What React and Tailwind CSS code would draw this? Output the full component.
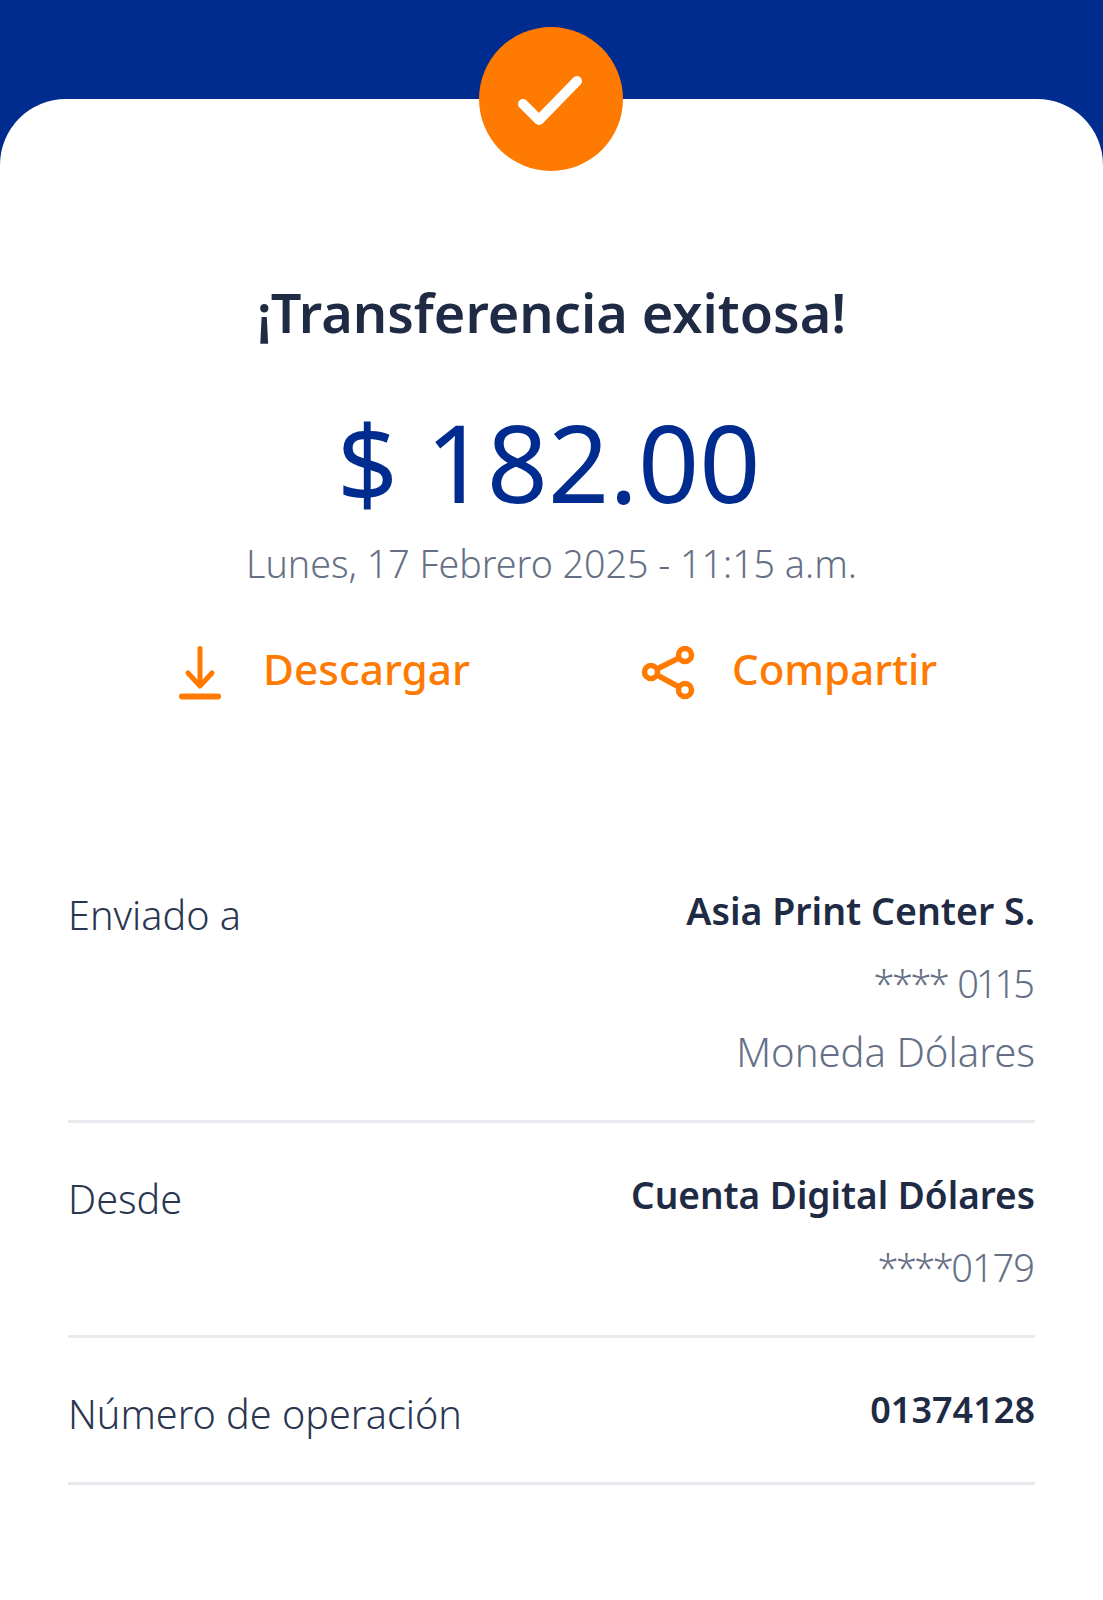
import React from "react";

function Row({ label, children, className }) {
  return (
    <div className={"flex justify-between items-start border-b-[3px] border-[#e8eaf0] " + className}>
      <div className="text-[39.6px] leading-[48px] text-[#2a3550] mt-[6px] font-light">{label}</div>
      <div className="flex flex-col items-end">{children}</div>
    </div>
  );
}

export default function App() {
  return (
    <div className="w-[1103px] h-[1600px] bg-white font-['Noto_Sans',sans-serif] overflow-hidden">
      <div className="bg-[#002b8f] h-[165px] flex justify-center relative">
        <div className="absolute left-0 right-0 top-[99px] h-[66px] bg-white rounded-t-[66px]"></div>
        <div className="absolute top-[27px] left-[479px] w-[144px] h-[144px] rounded-full bg-[#ff7a00] flex items-center justify-center">
          <svg width="66" height="54" viewBox="0 0 66 54" fill="none">
            <path d="M5 32L21 48L59 9" stroke="white" strokeWidth="10" strokeLinecap="round" strokeLinejoin="round" />
          </svg>
        </div>
      </div>
      <div className="flex flex-col items-center">
        <div className="mt-[116px] text-[54px] leading-[62px] font-semibold text-[#1f2a44]">¡Transferencia exitosa!</div>
        <div className="mt-[59px] mr-[6px] text-[107px] leading-[120px] text-[#002b8f] font-normal">$ 182.00</div>
        <div className="mt-[18px] text-[37.6px] leading-[48px] text-[#667085] font-light">Lunes, 17 Febrero 2025 - 11:15 a.m.</div>
        <div className="mt-[51px] w-full pl-[179px] flex items-start">
          <div className="flex items-start gap-[42px] w-[462px]">
            <svg width="42" height="54" viewBox="0 0 42 54" fill="none" stroke="#ff7a00" strokeLinecap="round" strokeLinejoin="round" className="mt-[7px]">
              <path d="M21 2.5V39" strokeWidth="5" />
              <path d="M9 27L21 40L33 27" strokeWidth="5" />
              <path d="M3 50.5H39" strokeWidth="6" />
            </svg>
            <span className="mt-[2px] text-[42.4px] leading-[56px] font-medium text-[#ff7a00]">Descargar</span>
          </div>
          <div className="flex items-start gap-[36px]">
            <svg width="55" height="54" viewBox="0 0 55 54" fill="none" stroke="#ff7a00" strokeWidth="5.5" className="mt-[7px]">
              <circle cx="10" cy="26" r="6.5" />
              <circle cx="44" cy="9" r="6.5" />
              <circle cx="44" cy="44" r="6.5" />
              <path d="M16 23L38 12M16 29L38 41" />
            </svg>
            <span className="mt-[2px] text-[42px] leading-[56px] font-medium text-[#ff7a00]">Compartir</span>
          </div>
        </div>
      </div>
      <div className="mx-[68px] mt-[185px] flex flex-col">
        <Row label="Enviado a" className="h-[238px]">
          <div className="mt-[2px] text-[37.5px] leading-[48px] font-semibold text-[#1f2a44]">Asia Print Center S.</div>
          <div className="mt-[24px] mr-[3px] text-[38px] leading-[48px] text-[#667085] font-light">
            <span className="tracking-[-2.5px]">****</span> <span className="tracking-[-3px]">0115</span>
          </div>
          <div className="mt-[21px] text-[40px] leading-[48px] text-[#667085] font-light">Moneda Dólares</div>
        </Row>
        <Row label="Desde" className="h-[215px] pt-[46px]">
          <div className="mt-[2px] text-[37px] leading-[48px] font-semibold text-[#1f2a44]">Cuenta Digital Dólares</div>
          <div className="mt-[24px] mr-[1px] text-[38px] leading-[48px] text-[#667085] font-light">
            <span className="tracking-[-2.5px]">****</span><span className="tracking-[-1px]">0179</span>
          </div>
        </Row>
        <Row label="Número de operación" className="h-[147px] pt-[46px]">
          <div className="mt-[2px] text-[36px] leading-[48px] font-semibold text-[#1f2a44]">01374128</div>
        </Row>
      </div>
    </div>
  );
}
